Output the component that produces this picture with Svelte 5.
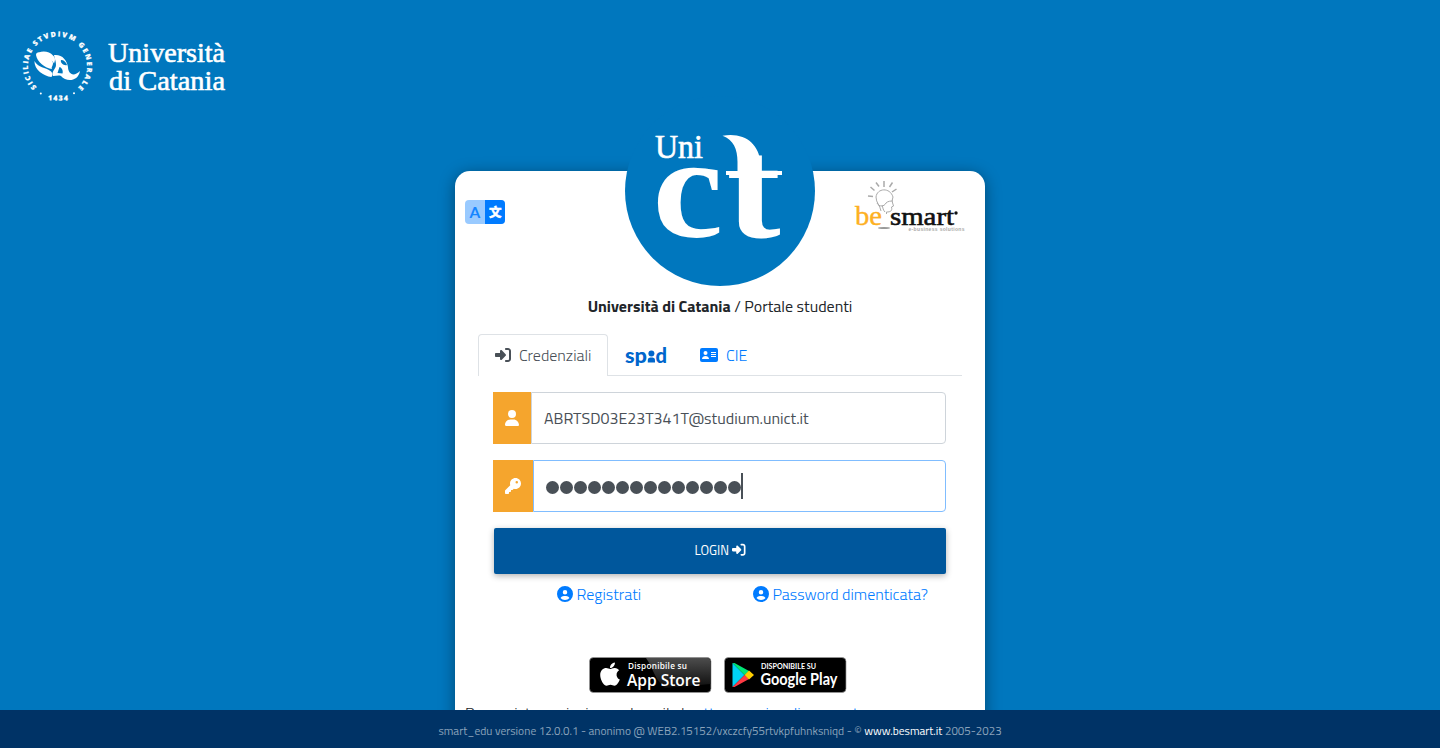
<script>
  const loginPath =
    'M217.9 105.9L340.7 228.7c7.2 7.2 11.3 17.1 11.3 27.3s-4.1 20.1-11.3 27.3L217.9 406.1c-6.4 6.4-15 9.9-24 9.9c-18.7 0-33.9-15.2-33.9-33.9l0-62.1L32 320c-17.7 0-32-14.3-32-32l0-64c0-17.7 14.3-32 32-32l128 0 0-62.1c0-18.7 15.2-33.9 33.9-33.9c9 0 17.6 3.6 24 9.9zM352 416l64 0c17.7 0 32-14.3 32-32l0-256c0-17.7-14.3-32-32-32l-64 0c-17.7 0-32-14.3-32-32s14.3-32 32-32l64 0c53 0 96 43 96 96l0 256c0 53-43 96-96 96l-64 0c-17.7 0-32-14.3-32-32s14.3-32 32-32z';
  const circleUserPath =
    'M399 384.2C376.9 345.8 335.4 320 288 320H224c-47.4 0-88.9 25.8-111 64.2c35.2 39.2 86.2 63.8 143 63.8s107.8-24.7 143-63.8zM0 256a256 256 0 1 1 512 0A256 256 0 1 1 0 256zm256 16a72 72 0 1 0 0-144 72 72 0 1 0 0 144z';
  const dots = Array.from({ length: 14 });
</script>

{#snippet icon(d, size)}
  <svg class="icon" width={size} height={size} viewBox="0 0 512 512" fill="currentColor"><path {d} /></svg>
{/snippet}

<div class="page">
  <header>
    <svg width="240" height="120" viewBox="0 0 240 120" fill="#fff">
      <defs>
        <path id="ring" d="M57.5 95.8a29.600 29.600 0 1 1 .01 0" />
      </defs>
      <text class="seal" font-size="7"><textPath href="#ring" startOffset="23" textLength="140">SICILIAE STVDIVM GENERALE</textPath></text>
      <text class="seal" x="48" y="100.500" font-size="7" textLength="20" transform="rotate(1 58 98)">1434</text>
      <circle cx="40.8" cy="93.5" r="1" /><circle cx="74" cy="93.3" r="1" />
      <path d="M36 55c0-4 5-3 8-1 5 3 8 5 9 9 0 3-2 4-1 6-7-1-15-7-16-14z" />
      <path d="M34.400 61c4 7 11 6 16 10 3 2 2 5 1 6-8-1-17-7-17-16z" />
      <path d="M39 52.500c4-2 11-1 14 3 3 3 2 5 1 8-3-6-9-6-15-11z" />
      <path fill-rule="evenodd" d="M54 55c8-1 13 5 14 12 0 6 5 11 12 4-2 11-14 11-19 5-2-1-5 0-8 0-2-5 3-7 3-11s-1-5-2-10zM61 60c-1 3 3 6 6 5-1-3-3-5-6-5zM59.500 67l-2 6 5 .5c1-3-1-6-3-6.500z" />
      <text class="didone" x="108" y="62" font-size="28" textLength="117" lengthAdjust="spacingAndGlyphs">Università</text>
      <text class="didone" x="109" y="89.500" font-size="28" textLength="116" lengthAdjust="spacingAndGlyphs">di Catania</text>
    </svg>
  </header>

  <main class="card">
    <div class="brands">
      <svg class="lang" width="40" height="24" viewBox="0 0 40 24">
        <rect width="40" height="24" rx="4" fill="#99caff" />
        <path d="M20 0h16a4 4 0 0 1 4 4v16a4 4 0 0 1-4 4H20z" fill="#007bff" />
        <text x="10" y="17.500" text-anchor="middle" font-family="Lato" font-weight="700" font-size="15.500" fill="#1585ff">A</text>
        <text x="30.200" y="16.800" text-anchor="middle" font-family="Noto Sans CJK SC" font-weight="900" font-size="12.500" fill="#fff" stroke="#fff" stroke-width=".4">文</text>
      </svg>
      <svg class="unict" width="190" height="190" viewBox="625 96 190 190">
        <circle cx="720" cy="191" r="95" fill="#0077be" />
        <g fill="#fff">
          <text class="didone" x="655" y="157.500" font-size="33" textLength="48" lengthAdjust="spacingAndGlyphs">Uni</text>
          <text class="serif" transform="translate(652.500 237) scale(1.09 1)" font-size="146">c</text>
          <text class="serif" transform="translate(726.500 236.500) scale(1.13 1)" font-size="144">t</text>
          <path d="M722.500 135.800C745 132 758.500 144 760.500 162v10H737.500v-10c0-13-4-22-15-26.200z" />
          <rect x="726" y="171" width="56" height="4" />
        </g>
      </svg>
      <svg class="besmart" width="112" height="56" viewBox="854 178 112 56">
        <g stroke="#aaa" stroke-width="1.500" fill="none">
          <path d="M868 196l5 .5M870.500 187l4 3.500M876 182.500l3 4M884 181v6M892.500 182.500l-3 4.500M896.500 189l-4.500 3" />
          <path stroke-width="1" d="M881 211c-1-6-5-8-5-14 1-9 14-10 17 0l-1 4 1.500 5-2 1c1 4-1 5-5 5v2" />
          <path stroke-width="1" d="M877 203c2 4 7 4 9 0 2-2 5-2 7-2M882 205c1 3 1 5 3 7" />
        </g>
        <ellipse cx="884" cy="228" rx="6" ry="1" fill="#999" />
        <g class="besmart-name">
          <text x="855" y="225" font-size="28" fill="#fdb022" stroke="#fdb022" stroke-width=".4" textLength="27" lengthAdjust="spacingAndGlyphs">be</text>
          <text x="890" y="225" font-size="26" fill="#111" stroke="#111" stroke-width=".6" textLength="64" lengthAdjust="spacingAndGlyphs">smart</text>
        </g>
        <circle cx="956" cy="213" r="1.700" fill="#111" />
        <text x="908.500" y="231" font-family="Liberation Sans" font-weight="700" font-size="5" fill="#aaa" textLength="56">e-business solutions</text>
      </svg>
    </div>

    <p class="portal"><b>Università di Catania</b> / Portale studenti</p>

    <nav>
      <a class="tab active" href="#top">{@render icon(loginPath, 16)}<span>Credenziali</span></a>
      <a class="tab spid" href="#top" aria-label="spid">
        <svg width="42" height="24" viewBox="0 0 42 24" fill="#06c">
          <text x="0" y="17.500" class="spidtext" textLength="22" lengthAdjust="spacingAndGlyphs">sp</text>
          <text x="30.500" y="17.500" class="spidtext" textLength="11.500" lengthAdjust="spacingAndGlyphs">d</text>
          <circle cx="26.400" cy="8.500" r="3" /><path d="M22.800 17.500v-2c0-3 2-3 3.600-3s3.600 0 3.600 3v2z" />
        </svg>
      </a>
      <a class="tab" href="#top">
        <svg class="icon" width="18" height="16" viewBox="0 0 18 16">
          <rect y="1" width="18" height="14" rx="2" fill="currentColor" />
          <g fill="#fff"><circle cx="5.500" cy="6" r="2" /><path d="M2 12c0-4 7-4 7 0zM11 5h5v1h-5zM11 7h5v1h-5zM11 9h5v1h-5z" /></g>
        </svg><span>CIE</span>
      </a>
    </nav>

    <form onsubmit={(e) => e.preventDefault()}>
      <div class="field">
        <div class="addon">
          <svg width="14" height="16" viewBox="0 0 448 512" fill="#fff"><path d="M224 256A128 128 0 1 0 224 0a128 128 0 1 0 0 256zm-45.7 48C79.8 304 0 383.8 0 482.3C0 498.7 13.3 512 29.7 512H418.3c16.4 0 29.7-13.3 29.7-29.7C448 383.8 368.2 304 269.7 304H178.3z" /></svg>
        </div>
        <div class="input"><span>ABRTSD03E23T341T@studium.unict.it</span></div>
      </div>
      <div class="field">
        <div class="addon key">
          <svg width="16" height="16" viewBox="0 0 512 512" fill="#fff"><path d="M336 352c97.2 0 176-78.8 176-176S433.2 0 336 0S160 78.8 160 176c0 18.7 2.9 36.8 8.3 53.7L7 391c-4.5 4.5-7 10.6-7 17v80c0 13.3 10.7 24 24 24h80c13.3 0 24-10.7 24-24V448h40c13.3 0 24-10.7 24-24V384h40c6.4 0 12.5-2.5 17-7l33.3-33.3c16.9 5.4 35 8.3 53.7 8.3zM376 96a40 40 0 1 1 0 80 40 40 0 1 1 0-80z" /></svg>
        </div>
        <div class="input focus">
          {#each dots as _}<i class="dot"></i>{/each}<i class="caret"></i>
        </div>
      </div>
      <button><span>LOGIN</span>{@render icon(loginPath, 13.5)}</button>
    </form>

    <div class="links">
      <a href="#top">{@render icon(circleUserPath, 16)}<span>Registrati</span></a>
      <a href="#top">{@render icon(circleUserPath, 16)}<span>Password dimenticata?</span></a>
    </div>

    <div class="stores">
      <svg width="123" height="36" viewBox="0 0 123 36">
        <defs><linearGradient id="gloss" x2="0" y2="1"><stop stop-color="#666" /><stop offset="1" stop-color="#111" /></linearGradient></defs>
        <rect x=".5" y=".5" width="121.500" height="35" rx="4" fill="#000" stroke="#999" stroke-width=".7" />
        <path d="M57 1h60.500q4 0 4 4v22L76 31C66 23 64 11 57 1z" fill="url(#gloss)" opacity=".75" />
        <svg x="11" y="4.500" width="20" height="25" viewBox="0 20 384 470"><path fill="#fff" d="M318.7 268.7c-.2-36.7 16.400-64.400 50-84.800-18.800-26.900-47.200-41.700-84.700-44.600-35.500-2.800-74.300 20.700-88.500 20.700-15 0-49.400-19.700-76.400-19.700C63.300 141.200 4 184.800 4 273.500q0 39.300 14.400 81.200c12.800 36.700 59 126.700 107.200 125.200 25.200-.6 43-17.900 75.800-17.900 31.800 0 48.300 17.900 76.400 17.900 48.600-.7 90.400-82.500 102.600-119.300-65.200-30.700-61.700-90-61.700-91.900zm-56.600-164.200c27.300-32.400 24.800-61.900 24-72.500-24.100 1.400-52 16.400-67.900 34.900-17.500 19.800-27.800 44.300-25.600 71.900 26.100 2 49.900-11.400 69.500-34.300z" /></svg>
        <g fill="#fff" font-family="Open Sans" font-weight="600">
          <text x="39" y="12" font-size="8.200" textLength="59">Disponibile su</text>
          <text x="38" y="28.500" font-size="16.500" textLength="73.500" lengthAdjust="spacingAndGlyphs">App Store</text>
        </g>
      </svg>
      <svg width="123" height="36" viewBox="0 0 123 36">
        <rect x=".5" y=".5" width="121.500" height="35" rx="4" fill="#000" stroke="#999" stroke-width=".7" />
        <path fill="#00d2f5" d="M8.500 6v24l12-12z" /><path fill="#00e676" d="M8.500 6l12 12 4.500-4L10.500 6z" />
        <path fill="#ff3a44" d="M8.500 30l12-12 4.500 4L10.500 30z" /><path fill="#ffce00" d="M20.500 18l4.500-4.500 5 4.500-5 4.500z" />
        <g fill="#fff" font-family="Lato">
          <text x="37" y="11.500" font-weight="700" font-size="7.400" textLength="55" lengthAdjust="spacingAndGlyphs">DISPONIBILE SU</text>
          <text x="36.500" y="27.500" font-weight="700" font-size="17" textLength="77" lengthAdjust="spacingAndGlyphs">Google Play</text>
        </g>
      </svg>
    </div>

    <p class="help">Per assistenza inviare un'email al <a href="#top">settore carriere lingue est</a></p>
  </main>

  <footer><span>smart_edu versione 12.0.0.1 - anonimo @ WEB2.15152/vxczcfy55rtvkpfuhnksniqd - © <b>www.besmart.it</b> 2005-2023</span></footer>
</div>

<style>
  :global(body) { margin: 0; }
  .page {
    height: 748px;
    overflow: hidden;
    box-sizing: border-box;
    position: relative;
    background: #0077be;
    color: #212529;
    font: 300 16px/24px "Titillium Web", Roboto, sans-serif;
  }
  a { color: #007bff; text-decoration: none; }
  p { margin: 0; }
  svg { overflow: visible; }
  header { height: 171px; }
  header svg { display: block; }
  .icon { flex: none; }
  .seal { font-family: "Open Sans", sans-serif; font-weight: 800; stroke: #fff; stroke-width: .2px; }
  .didone, .besmart-name { font-family: "Liberation Serif", serif; }
  .didone { stroke: #fff; stroke-width: .6px; }
  .serif { font-family: "Liberation Serif", serif; font-weight: 700; }
  .card {
    width: 530px;
    height: 640px;
    box-sizing: border-box;
    margin: 0 auto;
    padding: 0 10px;
    background: #fff;
    border-radius: 15px;
    box-shadow: 0 3px 16px rgba(0, 0, 0, .4);
  }
  .brands {
    display: grid;
    grid-template-columns: 160px 190px 160px;
    height: 115px;
  }
  .lang { margin-top: 29px; }
  .unict { margin-top: -75px; }
  .besmart { margin-top: 7px; justify-self: end; margin-right: 9px; }
  .portal { text-align: center; margin-top: 8px; white-space: nowrap; font-weight: 400; }
  .portal b { font-weight: 700; }
  nav {
    display: flex;
    height: 41px;
    margin: 16px 13px 0;
    border-bottom: 1px solid #dee2e6;
  }
  .tab { display: flex; align-items: center; padding: 0 17px; gap: 8px; box-sizing: border-box; }
  .tab.active {
    width: 130px;
    height: 42px;
    padding: 0 16px 1px;
    color: #495057;
    background: #fff;
    border: 1px solid #dee2e6;
    border-bottom: 0;
    border-radius: 4px 4px 0 0;
  }
  .tab.spid { width: 75px; padding-left: 16.5px; }
  .spid svg { margin-top: 4px; }
  .spidtext { font: 900 21px Lato, sans-serif; }
  form { padding: 16px 29px 0 28px; }
  .field { display: flex; height: 52px; margin-bottom: 16px; }
  .addon { width: 38px; flex: none; display: grid; place-items: center; background: #f5a52d; }
  .addon.key { width: 40px; }
  .input {
    flex: 1;
    display: flex;
    align-items: center;
    padding-left: 12px;
    border: 1px solid #ced4da;
    border-radius: 0 4px 4px 0;
    color: #495057;
    font-weight: 400;
  }
  .input.focus { border-color: #80bdff; gap: 1px; }
  .dot { width: 13px; height: 13px; border-radius: 50%; background: #495057; margin-top: 3px; }
  .caret { width: 2px; height: 26px; background: #495057; margin-left: -1px; }
  button {
    display: flex;
    align-items: center;
    justify-content: center;
    gap: 3px;
    width: 452px;
    height: 46px;
    margin-left: 1px;
    padding: 0 0 2px;
    border: 0;
    border-radius: 2px;
    background: #00579c;
    color: #fff;
    font: 400 13px "Titillium Web", Roboto, sans-serif;
    box-shadow: 0 2px 6px rgba(0, 0, 0, .3);
  }
  .links { display: flex; justify-content: space-between; padding: 8px 47px 0 92px; }
  .links a { display: flex; align-items: center; gap: 3.5px; }
  .stores { display: flex; gap: 12px; margin: 50.5px 0 0 123.5px; }
  .help { margin-top: 8.5px; white-space: nowrap; }
  footer {
    position: absolute;
    inset: auto 0 0;
    height: 38px;
    display: flex;
    align-items: center;
    justify-content: center;
    padding-top: 4px;
    box-sizing: border-box;
    background: #036;
    color: #8ba3bb;
    font-size: 11.52px;
    font-weight: 400;
    white-space: nowrap;
  }
  footer b { font-weight: 400; color: #fff; }
</style>
